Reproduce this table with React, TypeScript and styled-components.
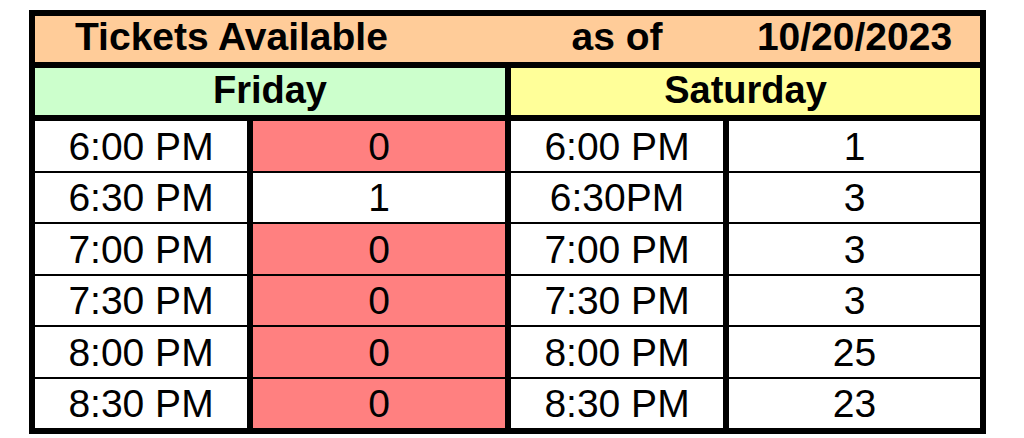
import React from "react";
import styled, { createGlobalStyle } from "styled-components";

const GlobalStyle = createGlobalStyle`
  html, body {
    margin: 0;
    padding: 0;
    background: #ffffff;
  }
  body {
    font-family: "Liberation Sans", Arial, sans-serif;
    color: #000;
  }
`;

const Page = styled.div`
  padding: 10px 0 0 29px;
`;

const Table = styled.div`
  width: 957px;
  box-sizing: border-box;
  background: #000;
  padding: 6px;
  display: flex;
  flex-direction: column;
  gap: 6px;
`;

const COLS = "212px 252px 212px 251px";

const TitleRow = styled.div`
  display: grid;
  grid-template-columns: ${COLS};
  column-gap: 6px;
  height: 46px;
  background: #ffcc99;
  font-weight: bold;
  font-size: 39px;
  line-height: 42px;
`;

const TitleCell = styled.div<{ $span?: number; $align?: string; $pad?: number }>`
  grid-column: span ${(p) => p.$span ?? 1};
  text-align: ${(p) => p.$align ?? "center"};
  padding-left: ${(p) => p.$pad ?? 0}px;
  white-space: nowrap;
`;

const DayRow = styled.div`
  display: grid;
  grid-template-columns: 470px 469px;
  column-gap: 6px;
  height: 47px;
`;

const DayCell = styled.div<{ $bg: string }>`
  background: ${(p) => p.$bg};
  font-weight: bold;
  font-size: 38px;
  line-height: 45px;
  text-align: center;
`;

const Body = styled.div`
  display: grid;
  grid-template-columns: ${COLS};
  grid-template-rows: repeat(6, 1fr);
  column-gap: 6px;
  row-gap: 2px;
  height: 307px;
`;

const Cell = styled.div<{ $sold?: boolean }>`
  background: ${(p) => (p.$sold ? "#ff8080" : "#ffffff")};
  font-size: 39px;
  display: flex;
  align-items: center;
  justify-content: center;
  padding-top: 2px;
  white-space: nowrap;
`;

const friday: [string, number][] = [
  ["6:00 PM", 0],
  ["6:30 PM", 1],
  ["7:00 PM", 0],
  ["7:30 PM", 0],
  ["8:00 PM", 0],
  ["8:30 PM", 0],
];

const saturday: [string, number][] = [
  ["6:00 PM", 1],
  ["6:30PM", 3],
  ["7:00 PM", 3],
  ["7:30 PM", 3],
  ["8:00 PM", 25],
  ["8:30 PM", 23],
];

export default function App() {
  return (
    <>
      <GlobalStyle />
      <Page>
        <Table>
          <TitleRow>
            <TitleCell $span={2} $align="left" $pad={40}>
              Tickets Available
            </TitleCell>
            <TitleCell>as of</TitleCell>
            <TitleCell>10/20/2023</TitleCell>
          </TitleRow>
          <DayRow>
            <DayCell $bg="#ccffcc">Friday</DayCell>
            <DayCell $bg="#ffff99">Saturday</DayCell>
          </DayRow>
          <Body>
            {friday.map(([time, fCount], i) => {
              const [sTime, sCount] = saturday[i];
              return (
                <React.Fragment key={i}>
                  <Cell>{time}</Cell>
                  <Cell $sold={fCount === 0}>{fCount}</Cell>
                  <Cell>{sTime}</Cell>
                  <Cell $sold={sCount === 0}>{sCount}</Cell>
                </React.Fragment>
              );
            })}
          </Body>
        </Table>
      </Page>
    </>
  );
}
